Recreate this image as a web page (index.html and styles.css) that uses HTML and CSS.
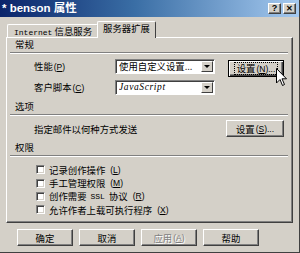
FILE: index.html
```html
<!DOCTYPE html>
<html lang="zh-CN">
<head>
    <meta charset="UTF-8">
    <title>benson 属性</title>
    <link rel="stylesheet" href="styles.css">
</head>
<body>
    <div class="window">
        <div class="titlebar">
            <span class="title">* benson 属性</span>
            <div class="caption-btns">
                <span class="cap-btn">?</span>
                <span class="cap-btn close">&#x2715;</span>
            </div>
        </div>

        <div class="client">
            <div class="tabs">
                <div class="tab"><span class="latin">Internet</span> 信息服务</div>
                <div class="tab active">服务器扩展</div>
            </div>

            <div class="panel">
                <div class="heading">常规</div>
                <div class="rule"></div>

                <div class="row">
                    <span class="label">性能<span class="key">(<u>P</u>)</span></span>
                    <div class="select">
                        <span class="value">使用自定义设置...</span>
                        <span class="drop"></span>
                    </div>
                    <div class="btn default push-down">
                        <span class="focus">设置<span class="key">(<u>N</u>)...</span></span>
                    </div>
                </div>
                <div class="row">
                    <span class="label">客户脚本<span class="key">(<u>C</u>)</span></span>
                    <div class="select">
                        <span class="value script">JavaScript</span>
                        <span class="drop"></span>
                    </div>
                </div>

                <div class="heading mt">选项</div>
                <div class="rule"></div>

                <div class="row tall">
                    <span class="label wide">指定邮件以何种方式发送</span>
                    <div class="btn side">设置<span class="key">(<u>S</u>)...</span></div>
                </div>

                <div class="heading mt">权限</div>
                <div class="rule"></div>

                <div class="checks">
                    <label class="check"><span class="box"></span>记录创作操作<span class="key">(<u>L</u>)</span></label>
                    <label class="check"><span class="box"></span>手工管理权限<span class="key">(<u>M</u>)</span></label>
                    <label class="check"><span class="box"></span>创作需要 <span class="latin">SSL</span> 协议<span class="key">(<u>R</u>)</span></label>
                    <label class="check"><span class="box"></span>允许作者上载可执行程序<span class="key">(<u>X</u>)</span></label>
                </div>
            </div>

            <div class="footer">
                <div class="btn">确定</div>
                <div class="btn">取消</div>
                <div class="btn disabled">应用<span class="key">(<u>A</u>)</span></div>
                <div class="btn">帮助</div>
            </div>
        </div>

        <svg class="cursor" width="12" height="19" viewBox="0 0 12 19">
            <path d="M0.5 0.5 L0.5 15 L4 11.5 L6.5 17.5 L8.5 16.5 L6 10.8 L10.5 10.8 Z" fill="#fff" stroke="#000" stroke-width="1"/>
        </svg>
    </div>
</body>
</html>
```

FILE: styles.css
```css
* {
    box-sizing: border-box;
}
body {
    margin: 0;
    background: #d4d0c8;
    font-family: "Noto Sans CJK SC", "Noto Sans", sans-serif;
    font-size: 9.4px;
    color: #000;
}
u {
    text-decoration: underline;
}

.window {
    position: relative;
    width: 300px;
    height: 253px;
    background: #d4d0c8;
    border-right: 1px solid #404040;
    border-bottom: 1px solid #404040;
    overflow: hidden;
}

/* title bar */
.titlebar {
    height: 17px;
    background: linear-gradient(to right, #0a246a 0%, #3a6ea5 45%, #a6caf0 100%);
    display: flex;
    align-items: center;
    justify-content: space-between;
    padding: 0 3px 0 2px;
}
.title {
    color: #fff;
    font-family: "Liberation Sans", "Noto Sans CJK SC", sans-serif;
    font-weight: bold;
    font-size: 11.5px;
    line-height: 1;
}
.caption-btns {
    display: flex;
    gap: 2px;
}
.cap-btn {
    width: 13px;
    height: 11px;
    background: #d4d0c8;
    border: 1px solid;
    border-color: #fff #404040 #404040 #fff;
    box-shadow: inset -1px -1px #808080;
    font-family: "Liberation Sans", sans-serif;
    font-weight: bold;
    font-size: 9px;
    line-height: 9px;
    text-align: center;
    color: #000;
}
.cap-btn.close {
    font-size: 8px;
}

.client {
    padding: 3px 0 0 6px;
}

/* tabs */
.tabs {
    display: flex;
    align-items: flex-end;
    height: 17px;
    padding-left: 1px;
}
.tab {
    height: 13px;
    padding: 0 5px 0 6px;
    border: 1px solid #fff;
    border-bottom: none;
    border-right-color: #404040;
    border-radius: 2px 2px 0 0;
    line-height: 12px;
    white-space: nowrap;
}
.tab.active {
    height: 17px;
    margin-bottom: -1px;
    position: relative;
    z-index: 1;
    background: #d4d0c8;
    padding: 0 5px;
    line-height: 13px;
    margin-left: -1px;
}
.latin {
    font-family: "Liberation Mono", monospace;
    font-size: 8px;
}
.key {
    font-family: "Liberation Sans", sans-serif;
    font-size: 8.5px;
    margin-left: 1px;
}

/* panel */
.panel {
    width: 287px;
    height: 186px;
    border: 1px solid;
    border-color: #fff #404040 #404040 #fff;
    box-shadow: inset -1px -1px #808080;
    padding: 0 4px 0 3px;
}
.heading {
    height: 12px;
    line-height: 12px;
    padding-left: 5px;
}
.heading.mt {
    margin-top: 4px;
}
.rule {
    height: 2px;
    margin: 2px 0 4px 0;
    border-top: 1px solid #808080;
    border-bottom: 1px solid #fff;
}

.row {
    display: flex;
    align-items: center;
    height: 16px;
    margin-bottom: 5px;
    padding-left: 24px;
}
.row.tall {
    height: 17px;
    margin-bottom: 3px;
}
.label {
    width: 81px;
    white-space: nowrap;
}
.label.wide {
    width: auto;
    flex: 1;
}
.select {
    width: 100px;
    height: 15px;
    display: flex;
    align-items: center;
    background: #fff;
    border: 1px solid;
    border-color: #808080 #fff #fff #808080;
    box-shadow: inset 1px 1px #404040;
    padding-left: 3px;
}
.value {
    flex: 1;
    white-space: nowrap;
    overflow: hidden;
    line-height: 12px;
}
.value.script {
    font-family: "Liberation Serif", serif;
    font-style: italic;
    font-size: 9.5px;
    letter-spacing: 0.6px;
}
.drop {
    width: 12px;
    height: 11px;
    margin-right: 1px;
    background: #d4d0c8;
    border: 1px solid;
    border-color: #fff #404040 #404040 #fff;
    position: relative;
}
.drop::after {
    content: "";
    position: absolute;
    left: 2px;
    top: 3px;
    border-left: 3px solid transparent;
    border-right: 3px solid transparent;
    border-top: 3px solid #000;
}

/* buttons */
.btn {
    width: 56px;
    height: 17px;
    display: flex;
    align-items: center;
    justify-content: center;
    background: #d4d0c8;
    border: 1px solid;
    border-color: #fff #404040 #404040 #fff;
    box-shadow: inset -1px -1px #808080;
    white-space: nowrap;
}
.btn.default {
    margin-left: 13px;
    border: 1px solid #000;
    box-shadow: inset 1px 1px #fff, inset -1px -1px #404040, inset -2px -2px #808080;
}
.push-down {
    margin-top: 5px;
}
.btn .focus {
    outline: 1px dotted #000;
    outline-offset: 0;
    padding: 0 2px;
    line-height: 10px;
}
.btn.side {
    width: 58px;
    margin-right: 4px;
}
.btn.disabled {
    color: #808080;
    text-shadow: 1px 1px #fff;
}

/* checkboxes */
.checks {
    display: flex;
    flex-direction: column;
    padding-left: 26px;
    padding-top: 2px;
}
.check {
    display: flex;
    align-items: center;
    gap: 4px;
    height: 13.4px;
    white-space: nowrap;
}
.box {
    width: 9px;
    height: 9px;
    background: #fff;
    border: 1px solid;
    border-color: #808080 #fff #fff #808080;
    box-shadow: inset 1px 1px #404040, inset -1px -1px #d4d0c8;
}

.footer {
    display: flex;
    gap: 6px;
    padding: 6px 0 0 11px;
}

.cursor {
    position: absolute;
    left: 276px;
    top: 68px;
}
```
